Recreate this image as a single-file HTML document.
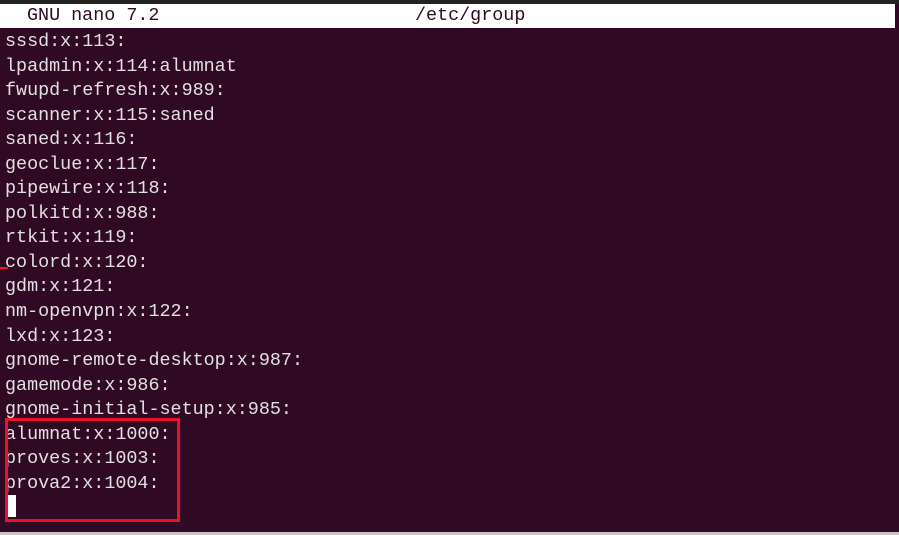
<!DOCTYPE html>
<html><head><style>
html,body{margin:0;padding:0;}
body{width:899px;height:535px;background:#300a24;position:relative;overflow:hidden;font-family:"Liberation Mono",monospace;font-size:18.4px;color:#e2dfe0;}
.top{position:absolute;left:0;top:0;width:899px;height:4px;background:#232323;}
.bar{position:absolute;left:0;top:4px;width:895px;height:24px;background:#fff;color:#300a24;}
.bar span{position:absolute;top:1px;line-height:22px;}
.l{position:absolute;left:5px;line-height:24.55px;white-space:pre;}
.box{position:absolute;left:5px;top:418px;width:169px;height:98px;border:3px solid #e8132a;}
.cur{position:absolute;left:8px;top:495px;width:8px;height:22px;background:#fff;}
.mark{position:absolute;left:0;top:267px;width:8px;height:2px;background:#e8132a;}
.bot{position:absolute;left:0;top:532px;width:899px;height:3px;background:#c9c4c8;}
</style></head><body>
<div class="top"></div>
<div class="bar"><span style="left:27px">GNU nano 7.2</span><span style="left:415px">/etc/group</span></div>
<div class="l" style="top:30px">sssd:x:113:
lpadmin:x:114:alumnat
fwupd-refresh:x:989:
scanner:x:115:saned
saned:x:116:
geoclue:x:117:
pipewire:x:118:
polkitd:x:988:
rtkit:x:119:
colord:x:120:
gdm:x:121:
nm-openvpn:x:122:
lxd:x:123:
gnome-remote-desktop:x:987:
gamemode:x:986:
gnome-initial-setup:x:985:
alumnat:x:1000:
proves:x:1003:
prova2:x:1004:</div>
<div class="box"></div>
<div class="cur"></div>
<div class="mark"></div>
<div class="bot"></div>
</body></html>
